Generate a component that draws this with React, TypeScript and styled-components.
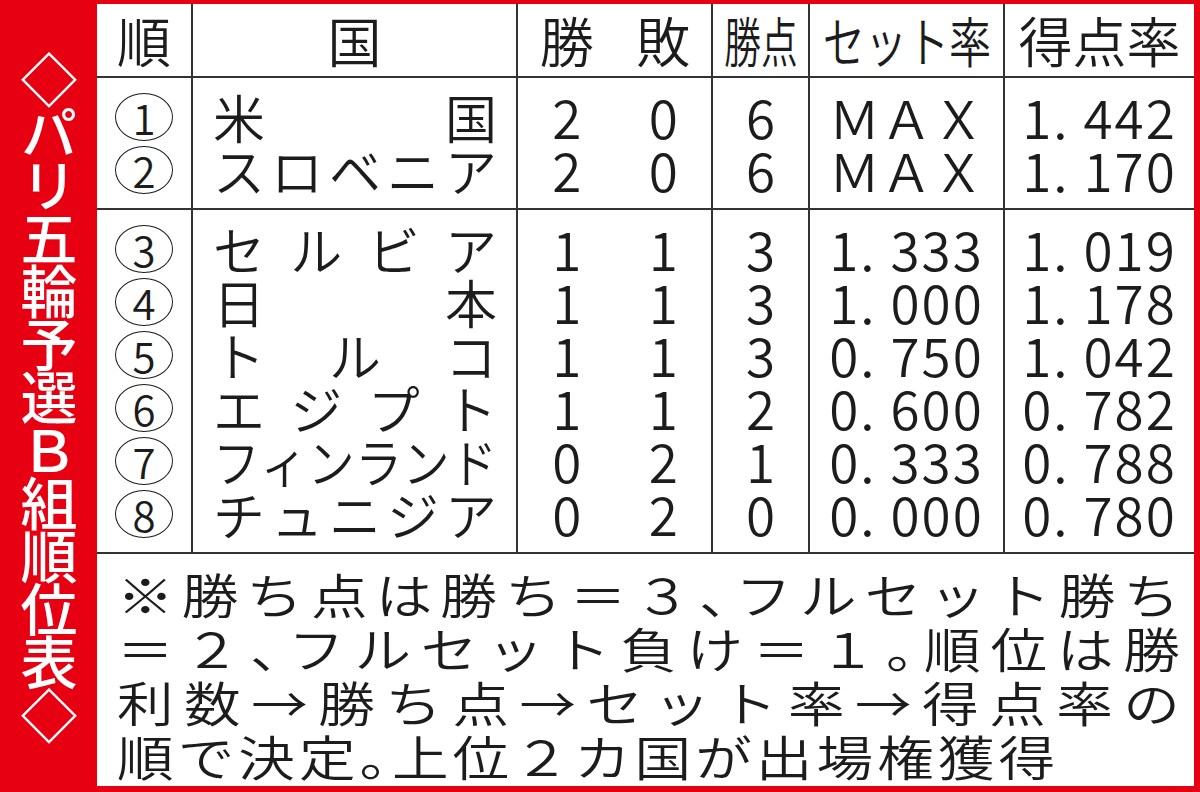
import React from 'react';
import styled, { createGlobalStyle } from 'styled-components';

const RED = '#e60012';
const INK = '#1c1c1c';
const LINE = '#333333';
const FONT = `"Noto Sans CJK JP", "Noto Sans", sans-serif`;

const Global = createGlobalStyle`
  html, body { margin: 0; padding: 0; background: ${RED}; }
  body { width: 1200px; height: 792px; overflow: hidden; font-family: ${FONT}; color: ${INK}; font-weight: 350; }
`;

const Page = styled.div`
  display: flex;
  width: 1200px;
  height: 792px;
  box-sizing: border-box;
  padding: 4px 6px 6px 0;
  background: ${RED};
`;

const TitleStrip = styled.div`
  width: 97px;
  flex: none;
  display: flex;
  align-items: center;
  justify-content: center;
`;

const TitleText = styled.h1`
  margin: 0;
  writing-mode: vertical-rl;
  text-orientation: upright;
  color: #fff;
  font-size: 57px;
  font-weight: 500;
  letter-spacing: -4px;
  line-height: 1;
`;

const Panel = styled.main`
  flex: 1;
  background: #fff;
  display: flex;
  flex-direction: column;
`;

const Table = styled.div`
  display: grid;
  grid-template-columns: 96px 325px 97.5px 97.5px 97px 195px 1fr;
  grid-template-rows: 74px 132px 344px;
`;

const Cell = styled.div<{ $open?: boolean; $last?: boolean; $start?: boolean }>`
  box-sizing: border-box;
  border-bottom: 2px solid ${LINE};
  border-right: ${(p) => (p.$open || p.$last ? 'none' : `2px solid ${LINE}`)};
  display: flex;
  flex-direction: column;
  align-items: ${(p) => (p.$start ? 'flex-start' : 'center')};
  justify-content: center;
  padding-left: ${(p) => (p.$start ? '20px' : '0')};
  overflow: visible;
`;

const HeadText = styled.span<{ $scale?: number }>`
  display: inline-block;
  font-size: 54px;
  line-height: 1;
  white-space: nowrap;
  transform: scaleX(${(p) => p.$scale ?? 1});
`;

const Line = styled.div`
  height: 53px;
  line-height: 53px;
  font-size: 52px;
  display: flex;
  align-items: center;
  justify-content: center;
  white-space: nowrap;
`;

const NumText = styled.span`
  font-size: 53px;
  line-height: 53px;
`;

const RateText = styled.span`
  font-size: 53px;
  line-height: 53px;
  letter-spacing: 2px;
`;

const MaxText = styled.span`
  font-size: 52px;
  line-height: 53px;
`;

const RankBadge = styled.span`
  box-sizing: border-box;
  width: 58px;
  height: 48px;
  border: 1.7px solid ${INK};
  border-radius: 50%;
  display: flex;
  align-items: center;
  justify-content: center;
  font-size: 42px;
  line-height: 1;
`;

const NameLine = styled.div<{ $scale: number }>`
  height: 53px;
  width: ${(p) => 284 / p.$scale}px;
  transform: scaleX(${(p) => p.$scale});
  transform-origin: left center;
  display: flex;
  align-items: center;
  justify-content: space-between;
  font-size: 52px;
  line-height: 53px;
  white-space: nowrap;
`;

const Note = styled.section`
  flex: 1;
  box-sizing: border-box;
  padding: 12px 0 0 20px;
  font-size: 48px;
  line-height: 54px;
`;

const NoteLine = styled.div<{ $justify?: boolean }>`
  width: ${1063 / 1.18}px;
  transform: scaleX(1.18);
  transform-origin: left center;
  white-space: nowrap;
  text-align: justify;
  text-justify: inter-character;
  text-align-last: ${(p) => (p.$justify ? 'justify' : 'left')};
  letter-spacing: ${(p) => (p.$justify ? '0px' : '3.4px')};
`;

const Punct = styled.span`
  font-feature-settings: "halt";
`;

type Team = {
  rank: string;
  name: string;
  scale?: number;
  win: string;
  loss: string;
  pts: string;
  set: string;
  score: string;
};

const groups: Team[][] = [
  [
    { rank: '1', name: '米国', win: '2', loss: '0', pts: '6', set: 'MAX', score: '1. 442' },
    { rank: '2', name: 'スロベニア', win: '2', loss: '0', pts: '6', set: 'MAX', score: '1. 170' },
  ],
  [
    { rank: '3', name: 'セルビア', win: '1', loss: '1', pts: '3', set: '1. 333', score: '1. 019' },
    { rank: '4', name: '日本', win: '1', loss: '1', pts: '3', set: '1. 000', score: '1. 178' },
    { rank: '5', name: 'トルコ', win: '1', loss: '1', pts: '3', set: '0. 750', score: '1. 042' },
    { rank: '6', name: 'エジプト', win: '1', loss: '1', pts: '2', set: '0. 600', score: '0. 782' },
    { rank: '7', name: 'フィンランド', scale: 0.9, win: '0', loss: '2', pts: '1', set: '0. 333', score: '0. 788' },
    { rank: '8', name: 'チュニジア', win: '0', loss: '2', pts: '0', set: '0. 000', score: '0. 780' },
  ],
];

const SetValue = ({ v }: { v: string }) =>
  v === 'MAX' ? <MaxText>ＭＡＸ</MaxText> : <RateText>{v}</RateText>;

export default function App() {
  return (
    <>
      <Global />
      <Page>
        <TitleStrip>
          <TitleText>◇パリ五輪予選Ｂ組順位表◇</TitleText>
        </TitleStrip>
        <Panel>
          <Table>
            <Cell><HeadText>順</HeadText></Cell>
            <Cell><HeadText>国</HeadText></Cell>
            <Cell $open><HeadText>勝</HeadText></Cell>
            <Cell><HeadText>敗</HeadText></Cell>
            <Cell><HeadText $scale={0.68}>勝点</HeadText></Cell>
            <Cell><HeadText $scale={0.78}>セット率</HeadText></Cell>
            <Cell $last><HeadText>得点率</HeadText></Cell>

            {groups.map((g, gi) => (
              <React.Fragment key={gi}>
                <Cell>
                  {g.map((t) => (
                    <Line key={t.rank}><RankBadge>{t.rank}</RankBadge></Line>
                  ))}
                </Cell>
                <Cell $start>
                  {g.map((t) => (
                    <NameLine key={t.rank} $scale={t.scale ?? 1}>
                      {Array.from(t.name).map((c, i) => (
                        <span key={i}>{c}</span>
                      ))}
                    </NameLine>
                  ))}
                </Cell>
                <Cell $open>
                  {g.map((t) => (
                    <Line key={t.rank}><NumText>{t.win}</NumText></Line>
                  ))}
                </Cell>
                <Cell>
                  {g.map((t) => (
                    <Line key={t.rank}><NumText>{t.loss}</NumText></Line>
                  ))}
                </Cell>
                <Cell>
                  {g.map((t) => (
                    <Line key={t.rank}><NumText>{t.pts}</NumText></Line>
                  ))}
                </Cell>
                <Cell>
                  {g.map((t) => (
                    <Line key={t.rank}><SetValue v={t.set} /></Line>
                  ))}
                </Cell>
                <Cell $last>
                  {g.map((t) => (
                    <Line key={t.rank}><RateText>{t.score}</RateText></Line>
                  ))}
                </Cell>
              </React.Fragment>
            ))}
          </Table>
          <Note>
            <NoteLine $justify>※勝ち点は勝ち＝３<Punct>、</Punct>フルセット勝ち</NoteLine>
            <NoteLine $justify>＝２<Punct>、</Punct>フルセット負け＝１<Punct>。</Punct>順位は勝</NoteLine>
            <NoteLine $justify>利数→勝ち点→セット率→得点率の</NoteLine>
            <NoteLine>順で決定<Punct>。</Punct>上位２カ国が出場権獲得</NoteLine>
          </Note>
        </Panel>
      </Page>
    </>
  );
}
